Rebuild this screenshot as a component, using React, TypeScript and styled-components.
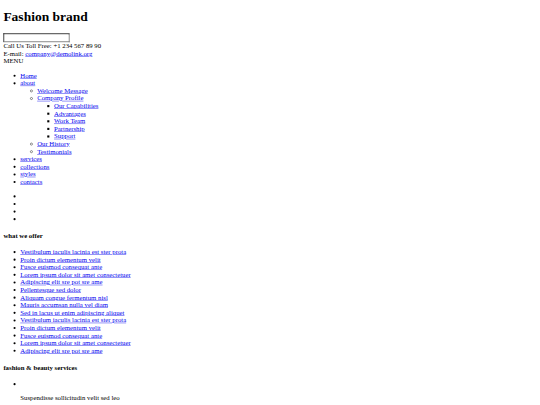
import React from 'react';
import styled, { createGlobalStyle } from 'styled-components';

const GlobalStyle = createGlobalStyle`
  html, body {
    margin: 0;
    overflow: hidden;
  }
  body {
    background-color: #ffffff;
  }
  a {
    color: #0000ee;
  }
`

// the reference is a 1280px wide page taken down to 540px
const Viewport = styled.div`
    display: flow-root;
    width: 1280px;
    transform: scale(0.4219);
    transform-origin: 0 0;
`

const Page = styled.div`
    margin: 8px;
    color: #000000;
    font-family: "Liberation Serif", "Times New Roman", serif;
    font-size: 16px;
    line-height: 1.125;
`

const Brand = styled.h1`
    font-size: 2em;
    font-weight: bold;
    margin: 0.67em 0;
`

const SearchForm = styled.form`
    margin: 0;
`

const SearchInput = styled.input`
    box-sizing: content-box;
    width: 149px;
    height: 15px;
    padding: 1px 2px;
    border: 2px inset #767676;
    font-family: "Liberation Sans", Arial, sans-serif;
    font-size: 13.33px;
    line-height: normal;
`

const Contact = styled.div``

const MenuLabel = styled.div``

const bullets = ['disc', 'circle', 'square']

const List = styled.ul< { level?: number } >`
    margin: ${props => props.level ? '0' : '1em 0'};
    padding-left: 40px;
    list-style-type: ${props => bullets[props.level || 0]};
`

const Heading = styled.h4`
    font-size: 1em;
    font-weight: bold;
    margin: 1.33em 0;
`

const Thumb = styled.div``

const Text = styled.p`
    margin: 1em 0;
`

const offers = [
    'Vestibulum iaculis lacinia est ster prota',
    'Proin dictum elementum velit',
    'Fusce euismod consequat ante',
    'Lorem ipsum dolor sit amet consectetuer',
    'Adipiscing elit sre pot sre ame',
    'Pellentesque sed dolor',
    'Aliquam congue fermentum nisl',
    'Mauris accumsan nulla vel diam',
    'Sed in lacus ut enim adipiscing aliquet',
    'Vestibulum iaculis lacinia est ster prota',
    'Proin dictum elementum velit',
    'Fusce euismod consequat ante',
    'Lorem ipsum dolor sit amet consectetuer',
    'Adipiscing elit sre pot sre ame',
]

const profile = ['Our Capabilities', 'Advantages', 'Work Team', 'Partnership', 'Support']

const App: React.FC = () => {
    return (
        <Viewport>
            <GlobalStyle />
            <Page>
                <Brand>Fashion brand</Brand>
                <SearchForm>
                    <SearchInput type="text" />
                </SearchForm>
                <Contact>Call Us Toll Free: +1 234 567 89 90</Contact>
                <Contact>E-mail: <a href="#">company@demolink.org</a></Contact>
                <MenuLabel>MENU</MenuLabel>
                <List>
                    <li><a href="#">Home</a></li>
                    <li>
                        <a href="#">about</a>
                        <List level={1}>
                            <li><a href="#">Welcome Message</a></li>
                            <li>
                                <a href="#">Company Profile</a>
                                <List level={2}>
                                    {profile.map((p, i) => <li key={i}><a href="#">{p}</a></li>)}
                                </List>
                            </li>
                            <li><a href="#">Our History</a></li>
                            <li><a href="#">Testimonials</a></li>
                        </List>
                    </li>
                    <li><a href="#">services</a></li>
                    <li><a href="#">collections</a></li>
                    <li><a href="#">styles</a></li>
                    <li><a href="#">contacts</a></li>
                </List>
                <List>
                    <li></li>
                    <li></li>
                    <li></li>
                    <li></li>
                </List>
                <Heading>what we offer</Heading>
                <List>
                    {offers.map((o, i) => <li key={i}><a href="#">{o}</a></li>)}
                </List>
                <Heading>fashion &amp; beauty services</Heading>
                <List>
                    <li>
                        <Thumb>&nbsp;</Thumb>
                        <Text>Suspendisse sollicitudin velit sed leo</Text>
                    </li>
                </List>
            </Page>
        </Viewport>
    );
}

export default App;
